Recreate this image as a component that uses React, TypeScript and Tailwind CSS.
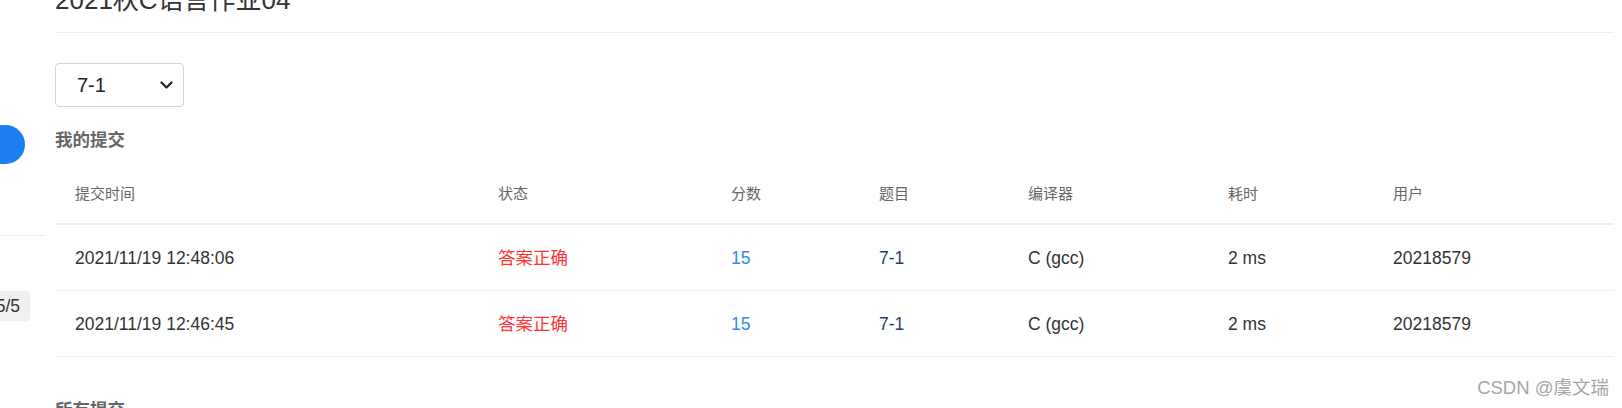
import React from "react";

type Row = {
  time: string;
  status: string;
  score: number;
  problem: string;
  compiler: string;
  cost: string;
  user: string;
};

const rows: Row[] = [
  { time: "2021/11/19 12:48:06", status: "答案正确", score: 15, problem: "7-1", compiler: "C (gcc)", cost: "2 ms", user: "20218579" },
  { time: "2021/11/19 12:46:45", status: "答案正确", score: 15, problem: "7-1", compiler: "C (gcc)", cost: "2 ms", user: "20218579" },
];

const headers = ["提交时间", "状态", "分数", "题目", "编译器", "耗时", "用户"];

const cols = "grid grid-cols-[423px_233px_148px_149px_200px_165px_1fr]";

export default function App() {
  return (
    <div
      className="relative flex h-[408px] w-full overflow-hidden bg-white text-[#333]"
      style={{ fontFamily: '"Liberation Sans", "Noto Sans CJK SC", sans-serif' }}
    >
      {/* sidebar, mostly scrolled out of view */}
      <aside className="flex w-[45px] shrink-0 flex-col overflow-hidden">
        <div className="mt-[125px] h-[39px] w-[25px] rounded-r-full bg-[#1e80f0]" />
        <div className="mt-[71px] h-px w-full bg-[#eeeeee]" />
        <div className="mt-[55px] flex h-[30px] w-[30px] items-center justify-end rounded-r-[3px] bg-[#f0f0f0] pr-[10px]">
          <span className="whitespace-nowrap text-[17.5px]">5/5</span>
        </div>
      </aside>

      <main className="ml-[10px] flex-1 pr-[8px]">
        <div className="mt-[-18px] border-b border-[#eeeeee] pb-[14px]">
          <h1 className="text-[26px] leading-[36px] font-normal text-[#333]">2021秋C语言作业04</h1>
        </div>

        <div className="mt-[30px] flex h-[44px] w-[129px] items-center justify-between rounded-[4px] border border-[#ced4da] pl-[21px] pr-[10px]">
          <span className="text-[20px] text-[#212529]">7-1</span>
          <svg width="13" height="9" viewBox="0 0 13 9" fill="none">
            <path d="M1.5 1.5 6.5 6.5 11.5 1.5" stroke="#222" strokeWidth="2.2" strokeLinecap="round" strokeLinejoin="round" />
          </svg>
        </div>

        <h2 className="mt-[21px] text-[17.5px] leading-[24px] font-bold text-[#666]">我的提交</h2>

        <div className="mt-[14px]">
          <div className={`${cols} h-[59px] items-center border-b-2 border-[#eeeeee] text-[15px] text-[#666]`}>
            {headers.map((h) => (
              <div key={h} className="pl-[20px]">{h}</div>
            ))}
          </div>
          {rows.map((r) => (
            <div key={r.time} className={`${cols} h-[66px] items-center border-b border-[#eeeeee] pt-px text-[17.5px]`}>
              <div className="pl-[20px]">{r.time}</div>
              <div className="pl-[20px] text-[#ff3333]">{r.status}</div>
              <div className="pl-[20px] text-[#2d8cf0]">{r.score}</div>
              <div className="pl-[20px] text-[#1f3f6e]">{r.problem}</div>
              <div className="pl-[20px]">{r.compiler}</div>
              <div className="pl-[20px]">{r.cost}</div>
              <div className="pl-[20px]">{r.user}</div>
            </div>
          ))}
        </div>

        <h2 className="mt-[41px] text-[17.5px] leading-[24px] font-bold text-[#666]">所有提交</h2>
      </main>

      {/* watermark */}
      <div className="absolute right-[13px] bottom-[6px] text-[18.5px] text-[#a6a6a6] [text-shadow:0_0_1px_#fff]">
        CSDN @虞文瑞
      </div>
    </div>
  );
}
